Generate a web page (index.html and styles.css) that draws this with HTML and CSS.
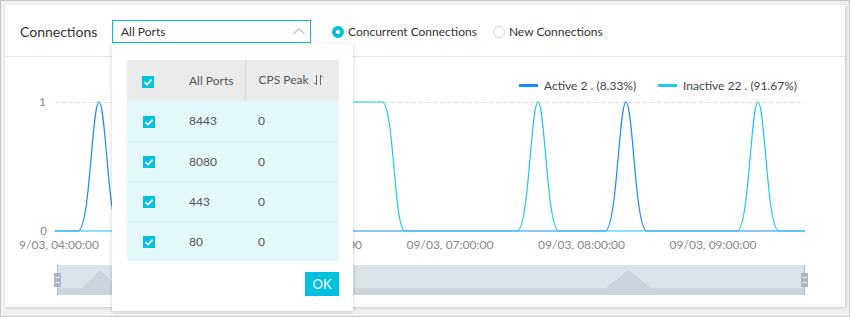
FILE: index.html
```html
<!DOCTYPE html>
<html>
<head>
<meta charset="utf-8">
<title>Connections</title>
<link rel="stylesheet" href="styles.css">
</head>
<body>
<div class="frame">
  <div class="card">
    <div class="toolbar">
      <span class="title">Connections</span>
      <div class="select">
        <span class="select-text">All Ports</span>
        <svg class="chev" width="12" height="8" viewBox="0 0 12 8"><polyline points="0.5,7 6,1.5 11.5,7" fill="none" stroke="#999" stroke-width="1"/></svg>
      </div>
      <label class="radio on"><span class="dot"></span>Concurrent Connections</label>
      <label class="radio"><span class="dot"></span>New Connections</label>
    </div>
    <svg class="chart" width="840" height="250" viewBox="5 57 840 250">
      <defs>
        <clipPath id="xclip"><rect x="19" y="57" width="826" height="250"/></clipPath>
      </defs>
      <!-- legend -->
      <rect x="519" y="84" width="19" height="3" fill="#1a8cff"/>
      <text class="legend" x="544" y="89.5">Active 2 . (8.33%)</text>
      <rect x="658" y="84" width="19" height="3" fill="#22c5f5"/>
      <text class="legend" x="683" y="89.5">Inactive 22 . (91.67%)</text>
      <!-- grid -->
      <line x1="55" y1="102.5" x2="805" y2="102.5" stroke="#dcdcdc" stroke-dasharray="4 3"/>
      <text class="axis" x="46" y="106" text-anchor="end">1</text>
      <text class="axis ylab" x="47" y="234.5" text-anchor="end">0</text>
      <!-- series -->
      <path d="M55,231 L78,231 C90,231 92,102 99,102 C106,102 108,231 120,231 L605,231 C617,231 619,102 626,102 C633,102 635,231 647,231 L805,231" fill="none" stroke="#1a8cff" stroke-width="1.2"/>
      <path d="M55,231 L135,231 C148,231 150,102 160,102 L382,102 C394,102 394,231 405,231 L517,231 C529,231 531,102 538,102 C545,102 547,231 559,231 L737,231 C749,231 751,102 758,102 C765,102 767,231 779,231 L805,231" fill="none" stroke="#22c5f5" stroke-width="1.2"/>
      <!-- x labels -->
      <g clip-path="url(#xclip)">
        <text class="axis" x="55.5" y="248.5" text-anchor="middle">09/03, 04:00:00</text>
        <text class="axis" x="318.5" y="248.5" text-anchor="middle">09/03, 06:00:00</text>
        <text class="axis" x="450" y="248.5" text-anchor="middle">09/03, 07:00:00</text>
        <text class="axis" x="581.5" y="248.5" text-anchor="middle">09/03, 08:00:00</text>
        <text class="axis" x="713" y="248.5" text-anchor="middle">09/03, 09:00:00</text>
      </g>
      <!-- data zoom -->
      <rect x="57" y="265" width="748" height="30" fill="#dce2ea"/>
      <path d="M57,295 L57,289 L82,289 L100,270.5 L118,289 L606,289 L628.5,270.5 L651,289 L805,289 L805,295 Z" fill="#cfd5de" stroke="none"/>
      <path d="M57,289 L82,289 L100,270.5 L118,289 L606,289 L628.5,270.5 L651,289 L805,289" fill="none" stroke="#c6cdd7" stroke-width="1"/>
      <line x1="57.5" y1="265" x2="57.5" y2="295" stroke="#a9b7c9"/>
      <line x1="804.5" y1="265" x2="804.5" y2="295" stroke="#a9b7c9"/>
      <rect x="54" y="273" width="7" height="14" fill="#a9b7c9"/>
      <rect x="55.5" y="277" width="4" height="1" fill="#fff"/>
      <rect x="55.5" y="282" width="4" height="1" fill="#fff"/>
      <rect x="801" y="273" width="7" height="14" fill="#a9b7c9"/>
      <rect x="802.5" y="277" width="4" height="1" fill="#fff"/>
      <rect x="802.5" y="282" width="4" height="1" fill="#fff"/>
    </svg>
  </div>

  <div class="dropdown">
    <table class="ports">
      <thead>
        <tr>
          <th class="c-check"><span class="cb"><svg width="12" height="12" viewBox="0 0 12 12"><path d="M2.5,6.2 L5,8.6 L9.6,3.6" fill="none" stroke="#fff" stroke-width="1.8"/></svg></span></th>
          <th class="c-port">All Ports</th>
          <th class="c-cps">CPS Peak <svg class="sort" width="11" height="12" viewBox="0 0 11 12"><path d="M3.5,1 V11 L1,8.5 M7.5,11 V1 L10,3.5" fill="none" stroke="#666" stroke-width="1"/></svg></th>
        </tr>
      </thead>
      <tbody>
        <tr><td class="c-check"><span class="cb"><svg width="12" height="12" viewBox="0 0 12 12"><path d="M2.5,6.2 L5,8.6 L9.6,3.6" fill="none" stroke="#fff" stroke-width="1.8"/></svg></span></td><td class="c-port">8443</td><td class="c-cps">0</td></tr>
        <tr><td class="c-check"><span class="cb"><svg width="12" height="12" viewBox="0 0 12 12"><path d="M2.5,6.2 L5,8.6 L9.6,3.6" fill="none" stroke="#fff" stroke-width="1.8"/></svg></span></td><td class="c-port">8080</td><td class="c-cps">0</td></tr>
        <tr><td class="c-check"><span class="cb"><svg width="12" height="12" viewBox="0 0 12 12"><path d="M2.5,6.2 L5,8.6 L9.6,3.6" fill="none" stroke="#fff" stroke-width="1.8"/></svg></span></td><td class="c-port">443</td><td class="c-cps">0</td></tr>
        <tr><td class="c-check"><span class="cb"><svg width="12" height="12" viewBox="0 0 12 12"><path d="M2.5,6.2 L5,8.6 L9.6,3.6" fill="none" stroke="#fff" stroke-width="1.8"/></svg></span></td><td class="c-port">80</td><td class="c-cps">0</td></tr>
      </tbody>
    </table>
    <div class="actions"><button class="ok">OK</button></div>
  </div>
</div>
</body>
</html>
```

FILE: styles.css
```css
* { box-sizing: border-box; }
html, body { margin: 0; padding: 0; background: #fff; }
body {
  font-family: "Lato", "Open Sans", sans-serif;
  color: #333;
}
.frame {
  position: relative;
  width: 850px;
  height: 317px;
  border: 1px solid #c8c8c8;
  background: #f1f1f1;
  padding: 4px 0 0 4px;
  overflow: hidden;
}
.card {
  width: 840px;
  height: 302px;
  background: #fff;
  box-shadow: 1px 1px 3px rgba(0, 0, 0, 0.18);
}
.toolbar {
  height: 52px;
  border-bottom: 1px solid #e6e6e6;
  display: flex;
  align-items: center;
  padding-left: 15px;
  padding-top: 2px;
}
.title {
  width: 92px;
  font-size: 14px;
  color: #333;
}
.select {
  width: 199px;
  height: 23px;
  border: 1px solid #00c1de;
  display: flex;
  align-items: center;
  justify-content: space-between;
  padding: 0 5px 0 8px;
  font-size: 12px;
  color: #333;
  margin-right: 21px;
}
.chev { display: block; margin-top: -2px; }
.radio {
  display: flex;
  align-items: center;
  font-size: 12px;
  color: #333;
  margin-right: 16px;
}
.dot {
  width: 12px;
  height: 12px;
  border-radius: 50%;
  border: 1px solid #d5d5d5;
  background: #fff;
  margin-right: 4px;
}
.radio.on .dot {
  border: 4px solid #00c1de;
}
.chart { display: block; }
.chart .legend {
  font-family: "Lato", "Open Sans", sans-serif;
  font-size: 12px;
  fill: #444;
}
.chart .axis {
  font-family: "Lato", "Open Sans", sans-serif;
  font-size: 12px;
  fill: #888;
}
.chart .ylab { font-size: 11.5px; }
.dropdown {
  position: absolute;
  left: 111px;
  top: 43px;
  width: 241px;
  height: 267px;
  background: #fff;
  box-shadow: 0 1px 4px rgba(0, 0, 0, 0.2);
  padding: 16px 14px 0 15px;
}
.ports {
  width: 212px;
  border-collapse: collapse;
  font-size: 12px;
  color: #555;
}
.ports th, .ports td {
  padding: 0;
  text-align: left;
  font-weight: normal;
}
.ports thead tr { height: 41px; background: #ebebeb; }
.ports tbody tr { height: 40px; background: #e4f7fb; }
.ports tbody tr + tr td { border-top: 1px solid #d8f1f6; }
.ports th { color: #555; }
.c-check { width: 48px; padding-left: 15px !important; }
.c-port { width: 70px; padding-left: 14px !important; }
.c-cps { padding-left: 13px !important; }
.ports thead .c-port { border-right: 1px solid #d6d6d6; }
.ports thead .c-cps { vertical-align: middle; padding-bottom: 3px !important; }
.sort { vertical-align: -2px; margin-left: 1px; }
.cb {
  display: block;
  width: 12px;
  height: 12px;
  background: #00c1de;
}
.cb svg { display: block; }
.ports thead .cb { margin-top: 2px; }
.ports tbody .cb { margin-top: 2px; margin-left: 1px; }
.actions {
  display: flex;
  justify-content: flex-end;
  margin-top: 11px;
}
.ok {
  width: 34px;
  height: 24px;
  border: 0;
  padding: 0;
  background: #00c1de;
  color: #fff;
  font-family: "Lato", "Open Sans", sans-serif;
  font-size: 13px;
}
```
